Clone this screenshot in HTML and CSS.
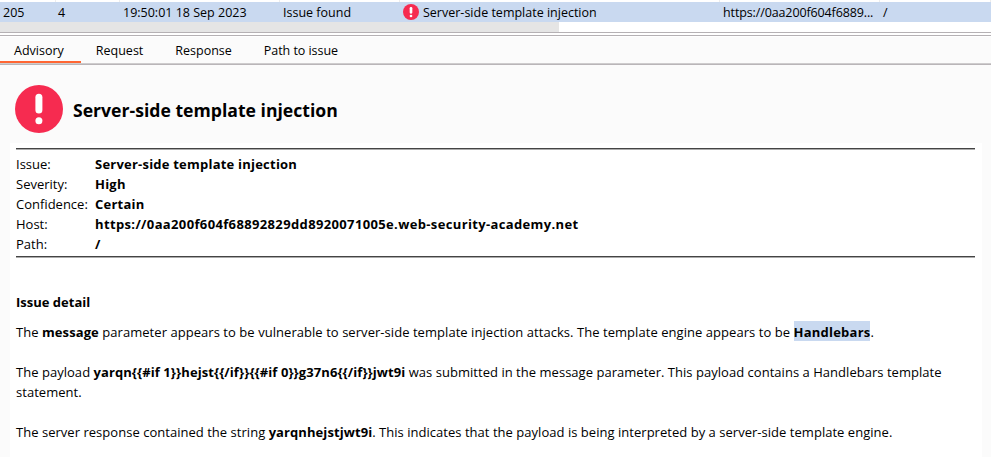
FILE: index.html
```html
<!DOCTYPE html>
<html lang="en">
<head>
<meta charset="utf-8">
<title>Server-side template injection</title>
<link rel="stylesheet" href="styles.css">
</head>
<body>
<div class="row-edge"><i></i><i></i><i></i><i></i><i></i><i></i><i></i></div>
<div class="row">
  <span>205</span>
  <span>4</span>
  <span>19:50:01 18 Sep 2023</span>
  <span>Issue found</span>
  <span><svg class="mini" viewBox="0 0 48 48"><circle cx="24" cy="24" r="24"/><rect x="20" y="9" width="8" height="20" rx="3.5"/><circle class="dot" cx="24" cy="36" r="4"/></svg>Server-side template injection</span>
  <span class="host">https://0aa200f604f6889...</span>
  <span>/</span>
</div>
<div class="scroll"><div class="thumb"></div></div>
<div class="divider"></div>
<nav class="tabs">
  <span class="tab active">Advisory</span>
  <span class="tab">Request</span>
  <span class="tab">Response</span>
  <span class="tab">Path to issue</span>
</nav>
<main>
  <header>
    <svg class="big" viewBox="0 0 48 48"><circle cx="24" cy="24" r="24"/><rect x="20.4" y="8.8" width="7" height="19.8" rx="3.5"/><circle class="dot" cx="23.9" cy="35.7" r="3.5"/></svg>
    <h1>Server-side template injection</h1>
  </header>
  <section class="page">
    <div class="rule"></div>
    <dl>
      <dt>Issue:</dt><dd>Server-side template injection</dd>
      <dt>Severity:</dt><dd>High</dd>
      <dt>Confidence:</dt><dd>Certain</dd>
      <dt>Host:</dt><dd class="url">https://0aa200f604f68892829dd8920071005e.web-security-academy.net</dd>
      <dt>Path:</dt><dd>/</dd>
    </dl>
    <div class="rule"></div>
    <h2>Issue detail</h2>
    <p class="lead">The <b>message</b> parameter appears to be vulnerable to server-side template injection attacks. The template engine appears to be <b class="mark">Handlebars</b>.</p>
    <p>The payload <b>yarqn{{#if 1}}hejst{{/if}}{{#if 0}}g37n6{{/if}}jwt9i</b> was submitted in the message parameter. This payload contains a Handlebars template<br>statement.</p>
    <p>The server response contained the string <b>yarqnhejstjwt9i</b>. This indicates that the payload is being interpreted by a server-side template engine.</p>
  </section>
</main>
</body>
</html>
```
FILE: styles.css
```css
* { box-sizing: border-box; }
body {
  margin: 0;
  height: 457px;
  overflow: hidden;
  background: #fff;
  color: #000;
  font: 12.5px/20px "Open Sans", "Noto Sans", sans-serif;
  white-space: nowrap;
}

/* Selected table row */
.row-edge, .row {
  display: grid;
  grid-template-columns: 56px 64px 160px 120px 320px 160px 1fr;
}
.row-edge { height: 2px; }
.row-edge i { border-right: 1px solid #ededed; }
.row { height: 20px; background: #c9d9f0; line-height: 22px; }
.row > span { padding-left: 3px; display: flex; }
.row > span:nth-child(2) { padding-left: 2px; }
.mini { width: 16px; height: 16px; margin: 2px 4px 0 0; }
.row .host { letter-spacing: -0.12px; }
.scroll { height: 10px; }
.thumb { width: 559px; height: 10px; background: #e5e5e5; }
.divider {
  height: 5px;
  border-top: 1px solid #b5b1b4;
  background: linear-gradient(#fff 2px, #b5b1b4 2px 3px, #fff 3px);
}

/* Tabs */
.tabs {
  height: 28px;
  display: flex;
  background: linear-gradient(#fbfbfb 26px, #cecccd 26px 27px, #b9b5b8 27px);
  line-height: 27px;
}
.tab { padding: 0 16px; height: 26px; }
.active { padding: 0 17px 0 14px; border-bottom: 2px solid #ff6633; }
.tab:nth-child(2) { padding-left: 15px; }
.tab:nth-child(4) { letter-spacing: -0.05px; }

/* Advisory */
main { background: #fbfbfb; height: 392px; padding: 20px 9px 0 10px; }
header { height: 58px; display: flex; padding-left: 5px; gap: 10px; }
.big { width: 48px; height: 48px; }
circle { fill: #f62b50; }
rect, .dot { fill: #fff; }
h1 { margin: 0; font-size: 17.63px; line-height: 50px; }
.page { background: #fff; padding: 5px 7px 0 6px; height: 314px; font-size: 13px; }
.rule { height: 2px; background: #ababab; border-top: 1px solid #444; }
dl { display: grid; grid-template-columns: 79px 1fr; margin: 4px 0 2px; }
dd { margin: 0; font-weight: bold; letter-spacing: 0.22px; }
dd.url { letter-spacing: 0.36px; }
h2 { margin: 34px 0 10px; font-size: 13px; line-height: 20px; }
p { margin: 0 0 20px; white-space: pre; letter-spacing: 0.03px; }
.lead { letter-spacing: 0.05px; }
b { letter-spacing: 0.08px; }
.mark {
  display: inline-block;
  height: 20px;
  margin-top: -1px;
  line-height: 22px;
  vertical-align: top;
  letter-spacing: 0.23px;
  background: #c9d9f0;
}
```
